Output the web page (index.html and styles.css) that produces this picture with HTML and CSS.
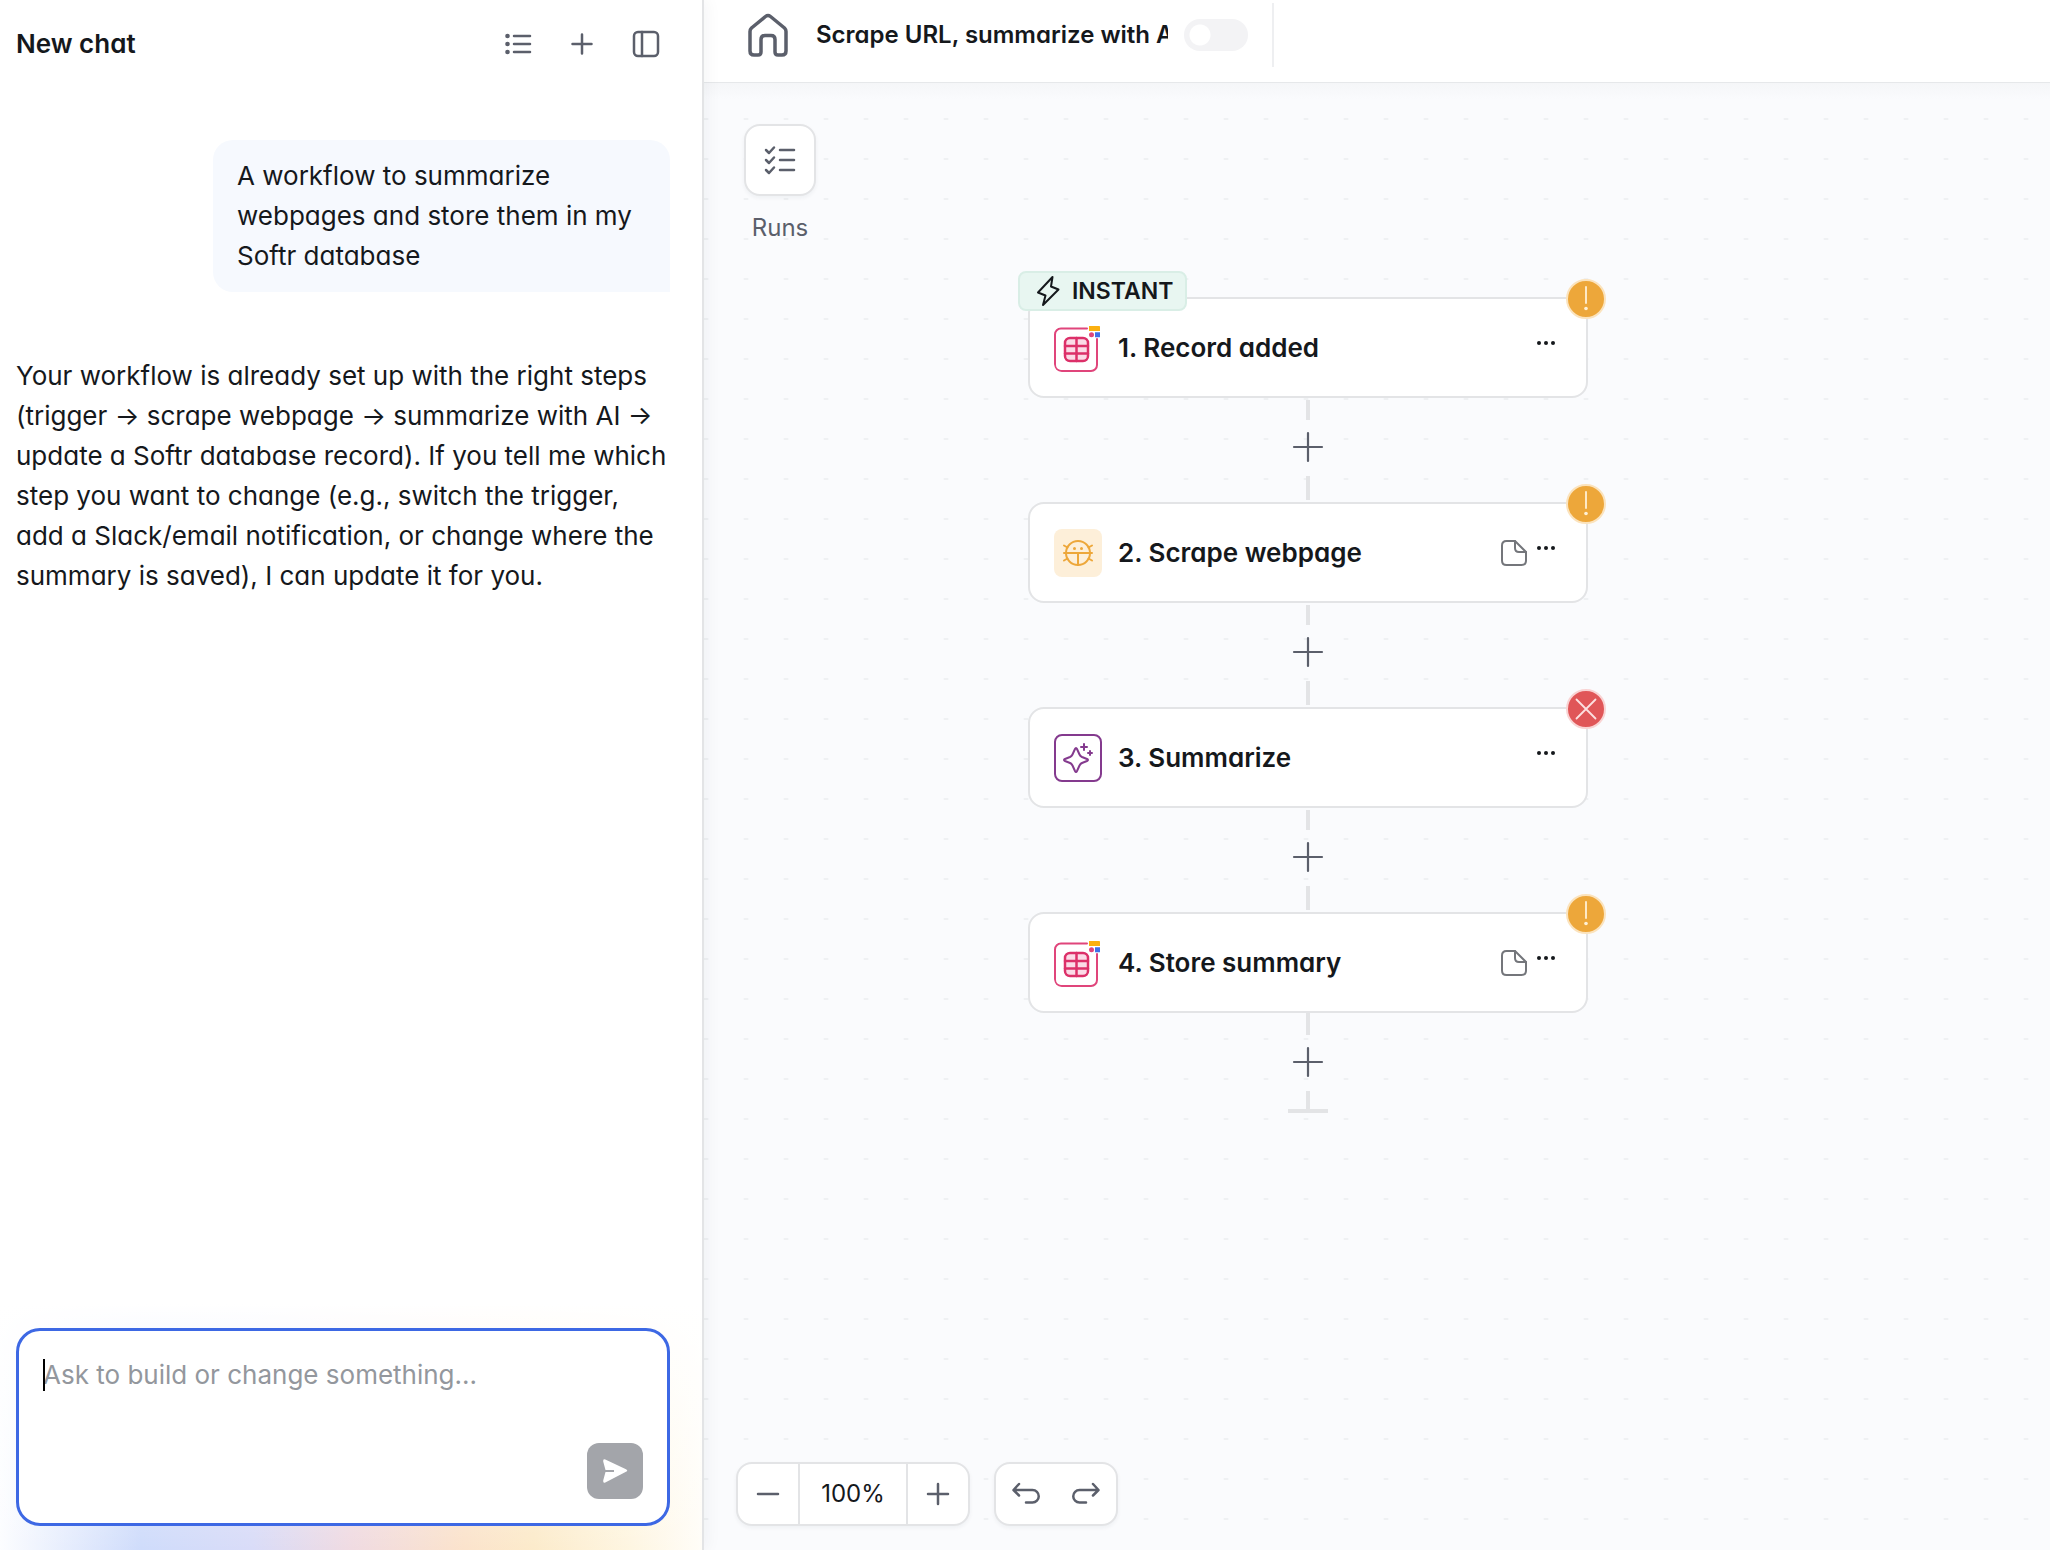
FILE: index.html
```html
<!DOCTYPE html>
<html lang="en">
<head>
<meta charset="utf-8">
<meta name="viewport" content="width=device-width, initial-scale=1">
<title>Workflow editor</title>
<link rel="stylesheet" href="styles.css">
</head>
<body>
<svg class="sprite" aria-hidden="true">
  <symbol id="plus" viewBox="0 0 32 32"><path d="M16 2v28M2 16h28"/></symbol>
  <symbol id="note" viewBox="0 0 28 28"><path d="M15 2H6.500Q2 2 2 6.500v15Q2 26 6.500 26h15q4.500 0 4.500-4.500V13z"/><path d="M15 2v7q0 4 4 4h7"/></symbol>
  <symbol id="dots" viewBox="0 0 20 6"><circle cx="3" cy="3" r="2"/><circle cx="10" cy="3" r="2"/><circle cx="17" cy="3" r="2"/></symbol>
  <symbol id="database" viewBox="0 0 48 48">
    <path d="M33 4.500H7a6 6 0 0 0-6 6v30.500a6 6 0 0 0 6 6h30a6 6 0 0 0 6-6V15" fill="none" stroke="#e0457b" stroke-width="2"/>
    <rect x="11" y="14" width="23" height="23" rx="5" fill="#fbdbe7" stroke="#dc3069" stroke-width="2.500"/>
    <path d="M11 22h23M11 29.500h23M22.500 14v23" stroke="#dc3069" stroke-width="2.500"/>
    <path d="M35 2h11v5H35z" fill="#fbb010" stroke="none"/><circle cx="37.500" cy="10.800" r="2.500" fill="#e0457b" stroke="none"/><path d="M41 8.300h5v5h-5z" fill="#4070e8" stroke="none"/>
  </symbol>
</svg>

<div class="app">
  <aside class="chat">
    <header class="chat-header">
      <h1 class="chat-title">New chat</h1>
      <div class="chat-actions">
        <button class="icon-button" type="button" aria-label="Chat history"><svg class="icon" viewBox="0 0 28 28"><path d="M10 6H26M10 14H26M10 22H26"/><g class="solid"><circle cx="3.500" cy="6" r="2.300"/><circle cx="3.500" cy="14" r="2.300"/><circle cx="3.500" cy="22" r="2.300"/></g></svg></button>
        <button class="icon-button" type="button" aria-label="Start new chat"><svg class="icon" viewBox="0 0 28 28"><path d="M14 4.500v19M4.500 14h19"/></svg></button>
        <button class="icon-button" type="button" aria-label="Toggle panel"><svg class="icon" viewBox="0 0 28 28"><rect x="2" y="2" width="24" height="24" rx="4"/><path d="M10 2v24"/></svg></button>
      </div>
    </header>
    <div class="messages">
      <p class="bubble">A workflow to summarize webpages and store them in my Softr database</p>
      <p class="reply">Your workflow is already set up with the right steps (trigger → scrape webpage → summarize with AI → update a Softr database record). If you tell me which step you want to change (e.g., switch the trigger, add a Slack/email notification, or change where the summary is saved), I can update it for you.</p>
    </div>
    <div class="composer-area">
      <form class="composer">
        <span class="caret"></span>
        <textarea class="prompt" rows="1" aria-label="Message" placeholder="Ask to build or change something..."></textarea>
        <button class="send" type="button" aria-label="Send"><svg viewBox="0 0 28 28"><path d="M4.300 2.500 25 12.200q2.500 1.300 0 2.600L4.300 25.500Q1.800 26.300 2.200 23.500L4.500 15H13v-2H4.500L2.200 4.500Q1.800 1.700 4.300 2.500z"/></svg></button>
      </form>
    </div>
  </aside>

  <main class="editor">
    <header class="topbar">
      <a class="home" href="#" aria-label="Home"><svg viewBox="0 0 44 44"><path d="M4 18.500q0-2 1.500-3.500L19.500 3.500Q22 1.500 24.500 3.500l14 11.500Q40 16.500 40 18.500V38q0 4-4 4h-4q-3 0-3-3V26.500q0-4-4-4h-6q-4 0-4 4V39q0 3-3 3H8q-4 0-4-4z"/></svg></a>
      <input class="workflow-name" type="text" aria-label="Workflow name" value="Scrape URL, summarize with AI">
      <input class="toggle" type="checkbox" aria-label="Publish workflow">
      <span class="divider"></span>
    </header>

    <div class="canvas">
      <div class="workspace">
        <div class="tool">
          <button class="tool-button" id="runs" type="button" aria-labelledby="runs-label"><svg class="icon" viewBox="0 0 32 32"><path d="M16 6h14M16 16h14M16 26h14M2 6l3 3 5-5.500M2 16l3 3 5-5.500M2 26l3 3 5-5.500"/></svg></button>
          <label class="tool-label" id="runs-label" for="runs">Runs</label>
        </div>

        <section class="flow">
          <article class="step">
            <span class="instant"><svg viewBox="0 0 24 32"><path d="M16.500 2 2 17.500l7.500 3L7 30l15.500-15.500-7.500-3z"/></svg>INSTANT</span>
            <svg class="app-icon"><use href="#database"/></svg>
            <h2 class="step-title">1. Record added</h2>
            <button class="more" type="button" aria-label="Step menu"><svg><use href="#dots"/></svg></button>
            <span class="status"><svg viewBox="0 0 36 36"><path d="M18 6v16"/><circle cx="18" cy="27.500" r="1.800"/></svg></span>
          </article>
          <div class="link"><button class="add" type="button" aria-label="Add step"><svg><use href="#plus"/></svg></button></div>

          <article class="step">
            <span class="app-icon bug"><svg viewBox="0 0 32 32"><circle cx="16" cy="16" r="12"/><path d="M2 16h28M16 16v12M5.500 10.500 2 8.500M26.500 10.500 30 8.500M5.500 21.500 2 23.500M26.500 21.500 30 23.500"/><g class="solid"><circle cx="12.500" cy="11.500" r="1.500"/><circle cx="19.500" cy="11.500" r="1.500"/></g></svg></span>
            <h2 class="step-title">2. Scrape webpage</h2>
            <button class="note" type="button" aria-label="Note"><svg><use href="#note"/></svg></button>
            <button class="more" type="button" aria-label="Step menu"><svg><use href="#dots"/></svg></button>
            <span class="status"><svg viewBox="0 0 36 36"><path d="M18 6v16"/><circle cx="18" cy="27.500" r="1.800"/></svg></span>
          </article>
          <div class="link"><button class="add" type="button" aria-label="Add step"><svg><use href="#plus"/></svg></button></div>

          <article class="step">
            <span class="app-icon ai"><svg viewBox="0 0 32 32"><path d="M13 7q1-2 2 0l2.500 5.500q.8 1.700 2.500 2.500l5 2q2 1 0 2l-5 2q-1.700.8-2.500 2.500L15 29q-1 2-2 0l-2.500-5.500q-.8-1.700-2.500-2.500l-5-2q-2-1 0-2l5-2q1.700-.8 2.500-2.500z"/><path d="M22 2v6M19 5h6M28 9v4M26 11h4"/></svg></span>
            <h2 class="step-title">3. Summarize</h2>
            <button class="more" type="button" aria-label="Step menu"><svg><use href="#dots"/></svg></button>
            <span class="status error"><svg viewBox="0 0 36 36"><path d="m8.500 8.500 19 19M27.500 8.500l-19 19"/></svg></span>
          </article>
          <div class="link"><button class="add" type="button" aria-label="Add step"><svg><use href="#plus"/></svg></button></div>

          <article class="step">
            <svg class="app-icon"><use href="#database"/></svg>
            <h2 class="step-title">4. Store summary</h2>
            <button class="note" type="button" aria-label="Note"><svg><use href="#note"/></svg></button>
            <button class="more" type="button" aria-label="Step menu"><svg><use href="#dots"/></svg></button>
            <span class="status"><svg viewBox="0 0 36 36"><path d="M18 6v16"/><circle cx="18" cy="27.500" r="1.800"/></svg></span>
          </article>
          <div class="link last"><button class="add" type="button" aria-label="Add step"><svg><use href="#plus"/></svg></button></div>
        </section>
      </div>

      <div class="controls">
        <div class="control-group">
          <button class="control" type="button" aria-label="Zoom out"><svg class="icon" viewBox="0 0 28 28"><path d="M4 14h20"/></svg></button>
          <output class="zoom-level">100%</output>
          <button class="control" type="button" aria-label="Zoom in"><svg class="icon" viewBox="0 0 28 28"><path d="M4 14h20M14 4v20"/></svg></button>
        </div>
        <div class="control-group">
          <button class="control" type="button" aria-label="Undo"><svg class="icon" viewBox="0 0 28 28"><path d="M7 4 1.500 10 7 15.500M2 10h18.500a6 6 0 0 1 0 12.500H14"/></svg></button>
          <button class="control" type="button" aria-label="Redo"><svg class="icon" viewBox="0 0 28 28"><path d="M21 4l5.500 6-5.500 5.500M26 10H7.500a6 6 0 0 0 0 12.500H14"/></svg></button>
        </div>
      </div>
    </div>
  </main>
</div>
</body>
</html>
```
FILE: styles.css
```css
:root {
  --ink: #15181c;
  --muted: #5b5f6b;
  --line: #e3e4e6;
  --amber: #eda73a;
}

* { box-sizing: border-box; }

body {
  margin: 0;
  color: var(--ink);
  background: #fff;
  font: 400 26px/40px Inter, "Liberation Sans", sans-serif;
  font-feature-settings: "cv11";
}

h1, h2, p { margin: 0; }

button {
  display: flex;
  align-items: center;
  justify-content: center;
  padding: 0;
  border: 0;
  background: none;
  color: var(--muted);
  font: inherit;
}

svg {
  display: block;
  fill: none;
  stroke: currentColor;
  stroke-linecap: round;
  stroke-linejoin: round;
}

.sprite { position: absolute; width: 0; height: 0; }
.solid { fill: currentColor; stroke: none; }
.icon { width: 28px; height: 28px; stroke-width: 2.5; }

.app { display: flex; min-height: 100vh; }

/* Chat panel */
.chat {
  position: relative;
  z-index: 1;
  display: flex;
  flex: 0 0 704px;
  flex-direction: column;
  border-right: 2px solid var(--line);
  background: #fff;
  box-shadow: 2px 0 16px rgba(20, 30, 50, .05);
}

.chat-header {
  display: flex;
  align-items: center;
  justify-content: space-between;
  height: 88px;
  padding: 0 42px 0 16px;
}

.chat-title { font-size: 26px; font-weight: 600; }
.chat-actions { display: flex; gap: 36px; }

.messages {
  display: flex;
  flex: 1;
  flex-direction: column;
  gap: 64px;
  padding: 52px 32px 0 16px;
}

.bubble {
  align-self: flex-end;
  width: 457px;
  padding: 16px 24px;
  border-radius: 20px 20px 0 20px;
  background: #f6f9fe;
}

.composer-area {
  padding: 24px 32px 24px 16px;
  background:
    linear-gradient(#fff, rgba(255, 255, 255, 0)),
    linear-gradient(90deg, #fcfdff, #cfdcfb 20%, #d9dcf8 36%, #f0dbe2 50%, #fbe3cc 66%, #fcebcb 76%, #fef6e2 90%, #fffdf8);
}

.composer {
  position: relative;
  display: flex;
  flex-direction: column;
  justify-content: space-between;
  height: 198px;
  padding: 24px;
  border: 3px solid #3d68e4;
  border-radius: 24px;
  background: #fff;
}

.prompt {
  width: 100%;
  height: 40px;
  padding: 0;
  border: 0;
  outline: 0;
  resize: none;
  overflow: hidden;
  background: none;
  color: var(--ink);
  font: 400 26px/40px Inter, "Liberation Sans", sans-serif;
}

.prompt::placeholder { color: #93979d; opacity: 1; }

.caret {
  position: absolute;
  top: 28px;
  left: 24px;
  width: 2px;
  height: 32px;
  background: #000;
}

.send {
  align-self: flex-end;
  width: 56px;
  height: 56px;
  border-radius: 12px;
  background: #a3a5aa;
  color: #fff;
}

.send svg { width: 28px; height: 28px; fill: currentColor; stroke: none; }

/* Editor */
.editor { display: flex; flex: 1; flex-direction: column; min-width: 0; }

.topbar {
  display: flex;
  align-items: center;
  height: 83px;
  padding: 0 42px 12px;
  border-bottom: 1px solid #e6e8ea;
}

.home { color: var(--muted); }
.home svg { width: 44px; height: 44px; stroke-width: 3.5; }

.workflow-name {
  width: 352px;
  margin: 0 16px 0 26px;
  padding: 0;
  border: 0;
  background: none;
  color: var(--ink);
  font: inherit;
  font-size: 24px;
  font-weight: 600;
  font-feature-settings: inherit;
}

.toggle {
  appearance: none;
  width: 64px;
  height: 32px;
  margin: 0;
  border-radius: 16px;
  background: radial-gradient(circle at 16px 16px, #fff 10px, transparent 11px) #f3f3f5;
}

.divider { width: 2px; height: 64px; margin-left: 24px; background: #eeeff1; }

.canvas {
  display: flex;
  flex: 1;
  flex-direction: column;
  justify-content: space-between;
  padding: 41px 32px 24px;
  background:
    linear-gradient(#f5f6f8, rgba(245, 246, 248, 0)) 0 0 / 100% 16px no-repeat,
    radial-gradient(ellipse 3px 1px, #eff1f3 90%, transparent) -18px 16px / 40px 40px,
    #fafbfd;
}

.workspace { display: flex; gap: 212px; padding-left: 8px; }

.tool { display: flex; flex-direction: column; align-items: center; gap: 12px; }

.tool-button {
  width: 72px;
  height: 72px;
  border: 2px solid var(--line);
  border-radius: 16px;
  background: #fff;
  box-shadow: 0 2px 4px rgba(20, 30, 50, .05);
}

.tool-button .icon { width: 32px; height: 32px; }
.tool-label { color: var(--muted); font-size: 24px; }

.flow { width: 560px; padding-top: 173px; }

.step {
  position: relative;
  display: flex;
  align-items: center;
  height: 101px;
  padding: 0 30px 0 24px;
  border: 2px solid var(--line);
  border-radius: 16px;
  background: #fff;
}

.app-icon {
  display: flex;
  flex: none;
  align-items: center;
  justify-content: center;
  width: 48px;
  height: 48px;
  border-radius: 8px;
}

.app-icon svg { width: 32px; height: 32px; stroke-width: 2; }
.bug { background: #fdefd9; color: var(--amber); }
.ai { border: 2px solid #843a8e; color: #843a8e; }

.step-title { flex: 1; margin-left: 16px; font-size: 26px; font-weight: 600; }

.note { margin-right: 8px; }
.note svg { width: 28px; height: 28px; color: #74767b; stroke-width: 2; }

.more { align-items: flex-start; height: 20px; padding-top: 2px; }
.more svg { width: 20px; height: 6px; fill: var(--ink); stroke: none; }

.status {
  position: absolute;
  top: -20px;
  right: -20px;
  width: 40px;
  height: 40px;
  border: 2px solid #fbe3bd;
  border-radius: 50%;
  background: var(--amber);
  color: #fff1d6;
}

.status svg { width: 36px; height: 36px; stroke-width: 1.8; }
.status circle { fill: currentColor; stroke: none; }
.status.error { border-color: #f9d3d3; background: #e05658; color: #fce0e0; }

.instant {
  position: absolute;
  top: -28px;
  left: -12px;
  display: flex;
  align-items: center;
  gap: 12px;
  height: 40px;
  padding: 0 12px 0 16px;
  border: 2px solid #d9eee6;
  border-radius: 8px;
  background: #e8f6f1;
  font-size: 23px;
  font-weight: 600;
}

.instant svg { width: 24px; height: 32px; stroke-width: 2; }

.link {
  display: flex;
  justify-content: center;
  height: 104px;
  padding-top: 33px;
  background:
    linear-gradient(var(--line), var(--line)) 50% 2px / 4px 20px no-repeat,
    linear-gradient(var(--line), var(--line)) 50% 78px / 4px 24px no-repeat;
}

.link.last {
  background:
    linear-gradient(var(--line), var(--line)) 50% 0 / 4px 22px no-repeat,
    linear-gradient(var(--line), var(--line)) 50% 78px / 4px 18px no-repeat,
    linear-gradient(var(--line), var(--line)) 50% 96px / 40px 4px no-repeat;
}

.add { width: 32px; height: 32px; }
.add svg { width: 32px; height: 32px; stroke-width: 2.2; }

/* Canvas controls */
.controls { display: flex; gap: 24px; }

.control-group {
  display: flex;
  height: 64px;
  border: 2px solid var(--line);
  border-radius: 16px;
  background: #fff;
  box-shadow: 0 2px 4px rgba(20, 30, 50, .05);
}

.control { width: 60px; }

.zoom-level {
  display: flex;
  align-items: center;
  justify-content: center;
  width: 110px;
  border: solid var(--line);
  border-width: 0 2px;
  font-size: 24px;
}
```
